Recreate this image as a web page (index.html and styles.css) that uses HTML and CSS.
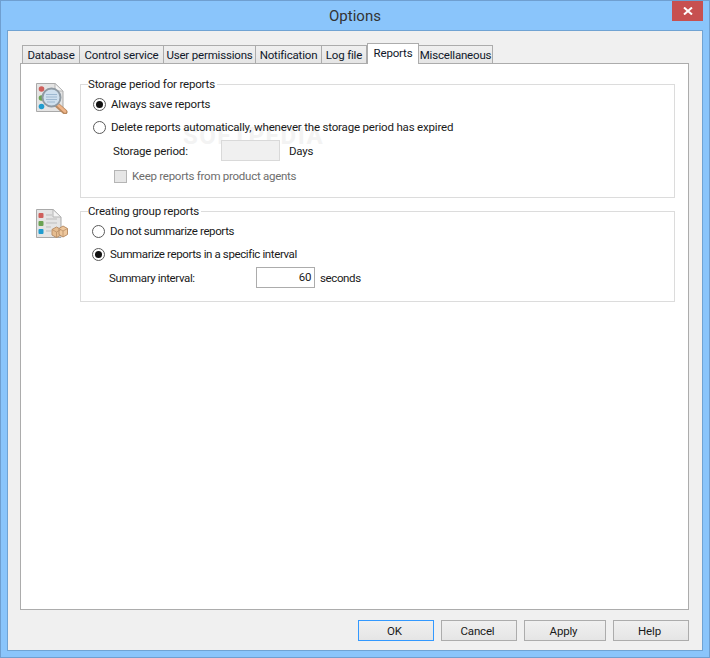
FILE: index.html
```html
<!DOCTYPE html>
<html lang="en">
<head>
<meta charset="utf-8">
<title>Options</title>
<link rel="stylesheet" href="styles.css">
</head>
<body>
<div class="window">
  <header class="titlebar">
    <span class="title">Options</span>
    <button class="close" aria-label="Close">
      <svg width="10" height="8" viewBox="0 0 10 8"><path d="M1 .5 L9 7.500 M9 .5 L1 7.500" stroke="#fff" stroke-width="2" fill="none"/></svg>
    </button>
  </header>
  <div class="client">
    <nav class="tabs">
      <span class="tab t-db">Database</span>
      <span class="tab t-cs">Control service</span>
      <span class="tab t-up">User permissions</span>
      <span class="tab t-no">Notification</span>
      <span class="tab t-lf">Log file</span>
      <span class="tab active t-re">Reports</span>
      <span class="tab t-mi">Miscellaneous</span>
    </nav>
    <main class="panel">
      <span class="watermark">SOFTPEDIA</span>
      <section class="section first">
        <svg class="icon" width="34" height="32" viewBox="0 0 34 32">
          <path d="M1.500 1.500H20L28 9V29.500H1.500Z" fill="#e4e4e4" stroke="#a9a9a9"/>
          <path d="M20 1.500V9H28Z" fill="#f5f5f5" stroke="#b5b5b5"/>
          <circle cx="6.500" cy="7" r="2.800" fill="#cf5f5b"/>
          <circle cx="6.500" cy="16" r="2.800" fill="#6ba253"/>
          <circle cx="6.500" cy="24.500" r="2.800" fill="#1f9ccf"/>
          <path d="M22 23L30 30" stroke="#b98a60" stroke-width="5" stroke-linecap="round"/>
          <path d="M23 23L30 29.500" stroke="#efb488" stroke-width="2.600" stroke-linecap="round"/>
          <circle cx="16.500" cy="15.500" r="9" fill="#cfe0ee" stroke="#8f9aa3" stroke-width="2"/>
          <path d="M11 12.500H22M11 15H22M11 17.500H22M12 20H20" stroke="#9db8d0" stroke-width="1"/>
        </svg>
        <fieldset class="group g-storage">
          <legend>Storage period for reports</legend>
          <label class="row r-first"><span class="radio on"></span>Always save reports</label>
          <label class="row r-delete"><span class="radio"></span><span class="tx-delete">Delete reports automatically, whenever the storage period has expired</span></label>
          <div class="row field f-storage"><span class="fl-storage">Storage period:</span><span class="input disabled"></span><span class="unit">Days</span></div>
          <label class="row muted r-keep"><span class="check"></span>Keep reports from product agents</label>
        </fieldset>
      </section>
      <section class="section second">
        <svg class="icon" width="34" height="32" viewBox="0 0 34 32">
          <path d="M1.500 1.500H18L26 9V29.500H1.500Z" fill="#e4e4e4" stroke="#a9a9a9"/>
          <path d="M18 1.500V9H26Z" fill="#f5f5f5" stroke="#b5b5b5"/>
          <path d="M11 7H17M11 11H22M11 15H22M11 19H16M11 23H16" stroke="#bdbdbd" stroke-width="1"/>
          <rect x="3.500" y="5" width="5" height="5" rx="1" fill="#cf5f5b"/>
          <rect x="3.500" y="13" width="5" height="5" rx="1" fill="#6ba253"/>
          <rect x="3.500" y="21" width="5" height="5" rx="1" fill="#1f9ccf"/>
          <path d="M17 21.500L21.500 19L26 21.500V27L21.500 29.500L17 27Z" fill="#e6bd90" stroke="#b98f68"/>
          <path d="M24 20.500L28 18L32.500 20.500V26.500L28 29L24 26.500Z" fill="#eec79c" stroke="#b98f68"/>
          <path d="M17 21.500L21.500 24V29.500M26 21.500L21.500 24M24 20.500L28 23V29M32.500 20.500L28 23" stroke="#b98f68" stroke-width=".8" fill="none"/>
        </svg>
        <fieldset class="group g-summary">
          <legend>Creating group reports</legend>
          <label class="row r-none"><span class="radio"></span>Do not summarize reports</label>
          <label class="row r-spec"><span class="radio on"></span>Summarize reports in a specific interval</label>
          <div class="row field f-summary"><span class="fl-summary">Summary interval:</span><span class="input">60</span><span class="unit">seconds</span></div>
        </fieldset>
      </section>
    </main>
    <footer class="buttons">
      <button class="btn default">OK</button>
      <button class="btn">Cancel</button>
      <button class="btn wide">Apply</button>
      <button class="btn">Help</button>
    </footer>
  </div>
</div>
</body>
</html>
```
FILE: styles.css
```css
* { box-sizing: border-box; }
html, body { margin: 0; padding: 0; }
body { width: 710px; height: 658px; overflow: hidden; font: 11.5px/16px Roboto, "Open Sans", sans-serif; letter-spacing: -0.18px; color: #1a1a1a; }
.window { width: 710px; height: 658px; background: #8ac5fb; border: 1px solid #6f9fd0; display: flex; flex-direction: column; }
.titlebar { height: 29px; flex: none; display: flex; justify-content: center; position: relative; }
.title { font-size: 15px; line-height: 30px; color: #333; letter-spacing: 0; }
.close { position: absolute; top: 0; right: 6px; width: 31px; height: 20px; border: 0; padding: 0; background: #c75050; display: flex; align-items: center; justify-content: center; }
.client { flex: 1; margin: 0 6px 6px; background: #f0f0f0; border: 1px solid #70a3d3; padding: 12px 13px 9px 12px; display: flex; flex-direction: column; }
.tabs { display: flex; height: 20px; margin-left: 2px; align-items: flex-end; position: relative; z-index: 1; flex: none; }
.tab { height: 18px; border: 1px solid #acacac; border-bottom: 0; border-left-width: 0; background: linear-gradient(#f0f0f0, #e5e5e5); line-height: 18px; text-align: center; white-space: nowrap; color: #10182a; }
.t-db { width: 58px; border-left-width: 1px; }
.t-cs { width: 84px; }
.t-up { width: 92px; }
.t-no { width: 66px; }
.t-lf { width: 45px; }
.t-re { width: 52px; }
.t-mi { width: 74px; }
.tab.active { height: 21px; margin-bottom: -1px; background: #fff; border-left-width: 1px; line-height: 18px; padding-bottom: 3px; }
.panel { flex: none; height: 547px; background: #fff; border: 1px solid #acacac; padding: 13px 13px 0 14px; position: relative; }
.section { display: flex; align-items: flex-start; position: relative; }
.second { margin-top: 6px; }
.icon { flex: none; margin-right: 11px; margin-top: 5px; }
.second .icon { margin-top: 4px; }
.group { flex: 1; margin: 0; padding: 0 0 0 12px; border: 1px solid #dcdcdc; min-width: 0; }
.g-storage { height: 121px; }
.g-summary { height: 98px; padding-left: 11px; }
legend { padding: 0 2px 0 0; margin-left: -5px; line-height: 14px; color: #1a1a1a; }
.g-summary legend { margin-left: -4px; }
.row { display: flex; align-items: center; height: 16px; white-space: nowrap; }
.g-summary .row { letter-spacing: -0.38px; }
.r-keep { letter-spacing: -0.26px; }
.radio { width: 13px; height: 13px; border-radius: 50%; border: 1px solid #5a5a5a; background: #fff; margin-right: 5px; flex: none; position: relative; }
.radio.on::after { content: ""; position: absolute; left: 2px; top: 2px; width: 7px; height: 7px; border-radius: 50%; background: #111; }
.check { width: 13px; height: 13px; border: 1px solid #b5b5b5; background: #e6e6e6; margin-right: 5px; flex: none; }
.muted { color: #6d6d6d; }
.input { height: 21px; border: 1px solid #acacac; background: #fff; text-align: right; line-height: 19px; padding-right: 3px; display: block; flex: none; }
.input.disabled { background: #f0f0f0; border-color: #d9d9d9; }
.unit { margin-left: 9px; }
.r-first { margin-top: 5px; }
.r-delete { margin-top: 7px; }
.f-storage { margin-top: 5px; height: 21px; padding-left: 20px; }
.fl-storage { width: 108px; }
.f-storage .input { width: 59px; }
.r-keep { margin-top: 7px; padding-left: 21px; }
.r-none { margin-top: 5px; }
.r-spec { margin-top: 7px; }
.f-summary { margin-top: 5px; height: 21px; padding-left: 17px; }
.fl-summary { width: 147px; }
.f-summary .input { width: 59px; }
.f-summary .unit { margin-left: 5px; }
.watermark { position: absolute; left: 162px; top: 57px; font-size: 24px; line-height: 30px; font-weight: 700; letter-spacing: 1.5px; color: #f3f3f3; }
.buttons { display: flex; justify-content: flex-end; gap: 7px; margin-top: 10px; flex: none; }
.btn { width: 76px; height: 21px; padding: 0 3px 0 0; border: 1px solid #acacac; background: linear-gradient(#f0f0f0, #e5e5e5); font: inherit; letter-spacing: inherit; color: #1a1a1a; }
.btn.wide { width: 82px; }
.btn.default { border-color: #3399ff; }
```
